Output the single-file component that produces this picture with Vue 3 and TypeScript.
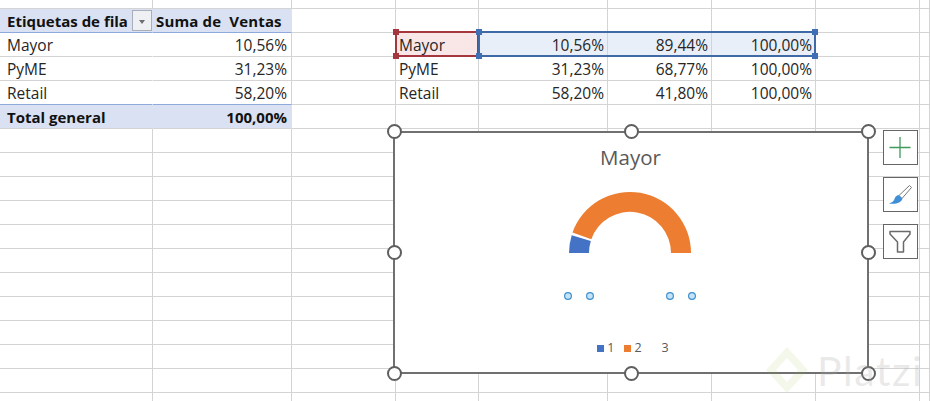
<script setup lang="ts">
type Cell = { text?: string; cls?: string }

const columnCount = 9
const rowCount = 18

// only the filled cells, keyed "row-col"
const filled: Record<string, Cell> = {
  '1-0': { text: 'Etiquetas de fila', cls: 'head indent' },
  '1-1': { text: 'Suma de  Ventas', cls: 'head sum' },
  '2-0': { text: 'Mayor', cls: 'pivot indent' },
  '2-1': { text: '10,56%', cls: 'pivot num' },
  '3-0': { text: 'PyME', cls: 'pivot indent' },
  '3-1': { text: '31,23%', cls: 'pivot num' },
  '4-0': { text: 'Retail', cls: 'pivot last indent' },
  '4-1': { text: '58,20%', cls: 'pivot num last' },
  '5-0': { text: 'Total general', cls: 'total indent' },
  '5-1': { text: '100,00%', cls: 'total num' },
  '2-3': { text: 'Mayor', cls: 'sel-red' },
  '2-4': { text: '10,56%', cls: 'num sel-blue' },
  '2-5': { text: '89,44%', cls: 'num sel-blue' },
  '2-6': { text: '100,00%', cls: 'num sel-blue' },
  '3-3': { text: 'PyME' },
  '3-4': { text: '31,23%', cls: 'num' },
  '3-5': { text: '68,77%', cls: 'num' },
  '3-6': { text: '100,00%', cls: 'num' },
  '4-3': { text: 'Retail' },
  '4-4': { text: '58,20%', cls: 'num' },
  '4-5': { text: '41,80%', cls: 'num' },
  '4-6': { text: '100,00%', cls: 'num' },
}

const cells: Cell[] = []
for (let r = 0; r < rowCount; r++) {
  for (let c = 0; c < columnCount; c++) {
    cells.push(filled[`${r}-${c}`] ?? {})
  }
}

const legend = [
  { label: '1', cls: 'blue' },
  { label: '2', cls: 'orange' },
  { label: '3', cls: 'none' },
]

const dots = [568, 590, 670, 692]
const handles = ['tl', 'tc', 'tr', 'ml', 'mr', 'bl', 'bc', 'br']
</script>

<template>
  <div class="sheet">
    <div v-for="(cell, i) in cells" :key="i" class="cell" :class="cell.cls">
      <span v-if="cell.text">{{ cell.text }}</span>
    </div>

    <button type="button" class="filter-btn" aria-label="Filtro">
      <i class="filter-arrow"></i>
    </button>

    <div class="range red">
      <i class="sq tl"></i><i class="sq bl"></i>
    </div>
    <div class="range blue">
      <i class="sq tl"></i><i class="sq tr"></i><i class="sq bl"></i><i class="sq br"></i>
    </div>

    <div class="chart">
      <h2 class="chart-title">Mayor</h2>
      <svg class="donut" viewBox="560 190 140 115" width="140" height="115">
        <path
          fill="#4472c4"
          d="M569 253 A61 61 0 0 1 571.7 235.2 L590.8 241 A41 41 0 0 0 589 253 Z"
        />
        <path
          fill="#ed7d31"
          d="M572.5 232.6 A61 61 0 0 1 691 253 L671 253 A41 41 0 0 0 591.3 239.3 Z"
        />
        <circle
          v-for="x in dots"
          :key="x"
          :cx="x"
          cy="296"
          r="3.4"
          fill="#c5e3f6"
          stroke="#3f8fcb"
          stroke-width="1.2"
        />
      </svg>
      <div class="legend">
        <span v-for="item in legend" :key="item.label" class="legend-item">
          <i class="swatch" :class="item.cls"></i>{{ item.label }}
        </span>
      </div>
      <i v-for="h in handles" :key="h" class="handle" :class="h"></i>
    </div>

    <div class="tools">
      <button type="button" class="tool" aria-label="Elementos de gráfico">
        <svg viewBox="0 0 33 33" width="33" height="33">
          <path d="M16 6V27M5.5 16.5H26.5" stroke="#3f9a5c" stroke-width="1.3" fill="none" />
        </svg>
      </button>
      <button type="button" class="tool" aria-label="Estilos de gráfico">
        <svg viewBox="0 0 33 33" width="33" height="33">
          <path d="M25.5 7.5 L27.5 9.5 L18 20.5 L15 17.5 Z" fill="#fff" stroke="#777" stroke-width="1" />
          <path d="M14.5 17 L18.4 20.8 C17 25 12 26.5 5 25.5 C8.5 24 10 23 10.5 21 C11 19 12.5 17.5 14.5 17 Z" fill="#3f8fd8" />
        </svg>
      </button>
      <button type="button" class="tool" aria-label="Filtros de gráfico">
        <svg viewBox="0 0 33 33" width="33" height="33">
          <path
            d="M6 6.5 H26 V9 L19.5 17 V27 H13.5 V17 L6 9 Z"
            fill="#fff"
            stroke="#6a6a6a"
            stroke-width="1.5"
            stroke-linejoin="round"
          />
        </svg>
      </button>
    </div>

    <div class="watermark">
      <svg viewBox="0 0 46 50" width="46" height="50">
        <path
          d="M23 2 L44 25 L23 48 L2 25 Z M23 13 L12 25 L23 37 L34 25 Z"
          fill="#8fbf3f"
          fill-opacity="0.1"
          fill-rule="evenodd"
        />
      </svg>
      <span>Platzi</span>
    </div>
  </div>
</template>

<style>
html,
body {
  margin: 0;
  overflow: hidden;
  background: #fff;
}
</style>

<style scoped>
.sheet {
  position: relative;
  display: grid;
  grid-template-columns: 153px 139px 104px 83px 129px 104px 104px 104px 10px;
  grid-template-rows: 9px;
  grid-auto-rows: 24px;
  width: 930px;
  height: 401px;
  overflow: hidden;
  font-family: "Open Sans", sans-serif;
  font-size: 15.5px;
  color: #262626;
  background: #fff;
}

.cell {
  box-sizing: border-box;
  display: flex;
  align-items: center;
  padding: 0 3px;
  border-right: 1px solid #d4d4d4;
  border-bottom: 1px solid #d4d4d4;
  white-space: pre;
  min-width: 0;
}

.indent {
  padding-left: 7px;
}

.num {
  justify-content: flex-end;
}

.pivot {
  border-right-color: transparent;
}

.pivot.num {
  padding-right: 4px;
  border-right-color: #d4d4d4;
}

.head,
.total {
  font-weight: 700;
  font-size: 15px;
  color: #111;
  background: #d9e1f2;
  border-right-color: #d9e1f2;
  border-bottom-color: #8ea9db;
}

.total {
  padding-right: 4px;
  border-bottom-color: #d4d4d4;
}

.sum {
  letter-spacing: 0.15px;
}

.pivot.last {
  border-bottom-color: #8ea9db;
}

.sel-red {
  background: #f9e7e7;
}

.sel-blue {
  background: #e8eff9;
}

.filter-btn {
  position: absolute;
  left: 132px;
  top: 10px;
  box-sizing: border-box;
  width: 20px;
  height: 21px;
  padding: 0;
  border: 1px solid #a9aeb8;
  background: #eef0f4;
}

.filter-arrow {
  display: block;
  width: 0;
  margin: 2px auto 0;
  border: 3px solid transparent;
  border-top: 4px solid #6e6e6e;
  border-bottom: 0;
}

.range {
  position: absolute;
  box-sizing: border-box;
  top: 31px;
  height: 26px;
  border: 2px solid;
}

.range.red {
  left: 395px;
  width: 84px;
  border-color: #a5363d;
}

.range.blue {
  left: 478px;
  width: 338px;
  border-color: #3f6aa6;
}

.sq {
  position: absolute;
  width: 6px;
  height: 6px;
}

.red .sq {
  background: #a5363d;
}

.blue .sq {
  background: #3f6fb5;
}

.sq.tl {
  left: -4px;
  top: -4px;
}

.sq.tr {
  right: -4px;
  top: -4px;
}

.sq.bl {
  left: -4px;
  bottom: -4px;
}

.sq.br {
  right: -4px;
  bottom: -4px;
}

.chart {
  position: absolute;
  left: 393px;
  top: 131px;
  box-sizing: border-box;
  display: flex;
  flex-direction: column;
  align-items: center;
  width: 476px;
  height: 243px;
  border: 2px solid #707070;
  background: #fff;
  color: #595959;
}

.chart-title {
  margin: 9px 0 0 -1px;
  height: 30px;
  font-size: 20.5px;
  line-height: 30px;
  font-weight: 400;
}

.donut {
  margin: 18px 2px 0 0;
}

.legend {
  display: flex;
  margin: 35px 0 0 14px;
  font-size: 12.5px;
  line-height: 16px;
}

.legend-item {
  display: flex;
  align-items: center;
  gap: 3px;
  margin-right: 10px;
}

.swatch {
  width: 7px;
  height: 7px;
}

.swatch.blue {
  background: #4472c4;
}

.swatch.orange {
  background: #ed7d31;
}

.swatch.none {
  background: transparent;
}

.handle {
  position: absolute;
  box-sizing: border-box;
  width: 15px;
  height: 15px;
  border: 2.5px solid #5f5f5f;
  border-radius: 50%;
  background: #fff;
}

.handle.tl,
.handle.ml,
.handle.bl {
  left: -8px;
}

.handle.tc,
.handle.bc {
  left: calc(50% - 7px);
}

.handle.tr,
.handle.mr,
.handle.br {
  right: -9px;
}

.handle.tl,
.handle.tc,
.handle.tr {
  top: -9px;
}

.handle.ml,
.handle.mr {
  top: calc(50% - 8px);
}

.handle.bl,
.handle.bc,
.handle.br {
  bottom: -9px;
}

.tools {
  position: absolute;
  left: 883px;
  top: 130px;
  display: flex;
  flex-direction: column;
  gap: 12px;
}

.tool {
  box-sizing: border-box;
  width: 35px;
  height: 35px;
  padding: 0;
  border: 1px solid #666;
  background: #fff;
}

.tool svg {
  display: block;
}

.watermark {
  position: absolute;
  left: 764px;
  top: 345px;
  display: flex;
  align-items: center;
  gap: 7px;
  font-family: Lato, sans-serif;
  font-size: 41px;
  letter-spacing: 1.5px;
  color: rgba(170, 170, 170, 0.25);
  pointer-events: none;
}
</style>
